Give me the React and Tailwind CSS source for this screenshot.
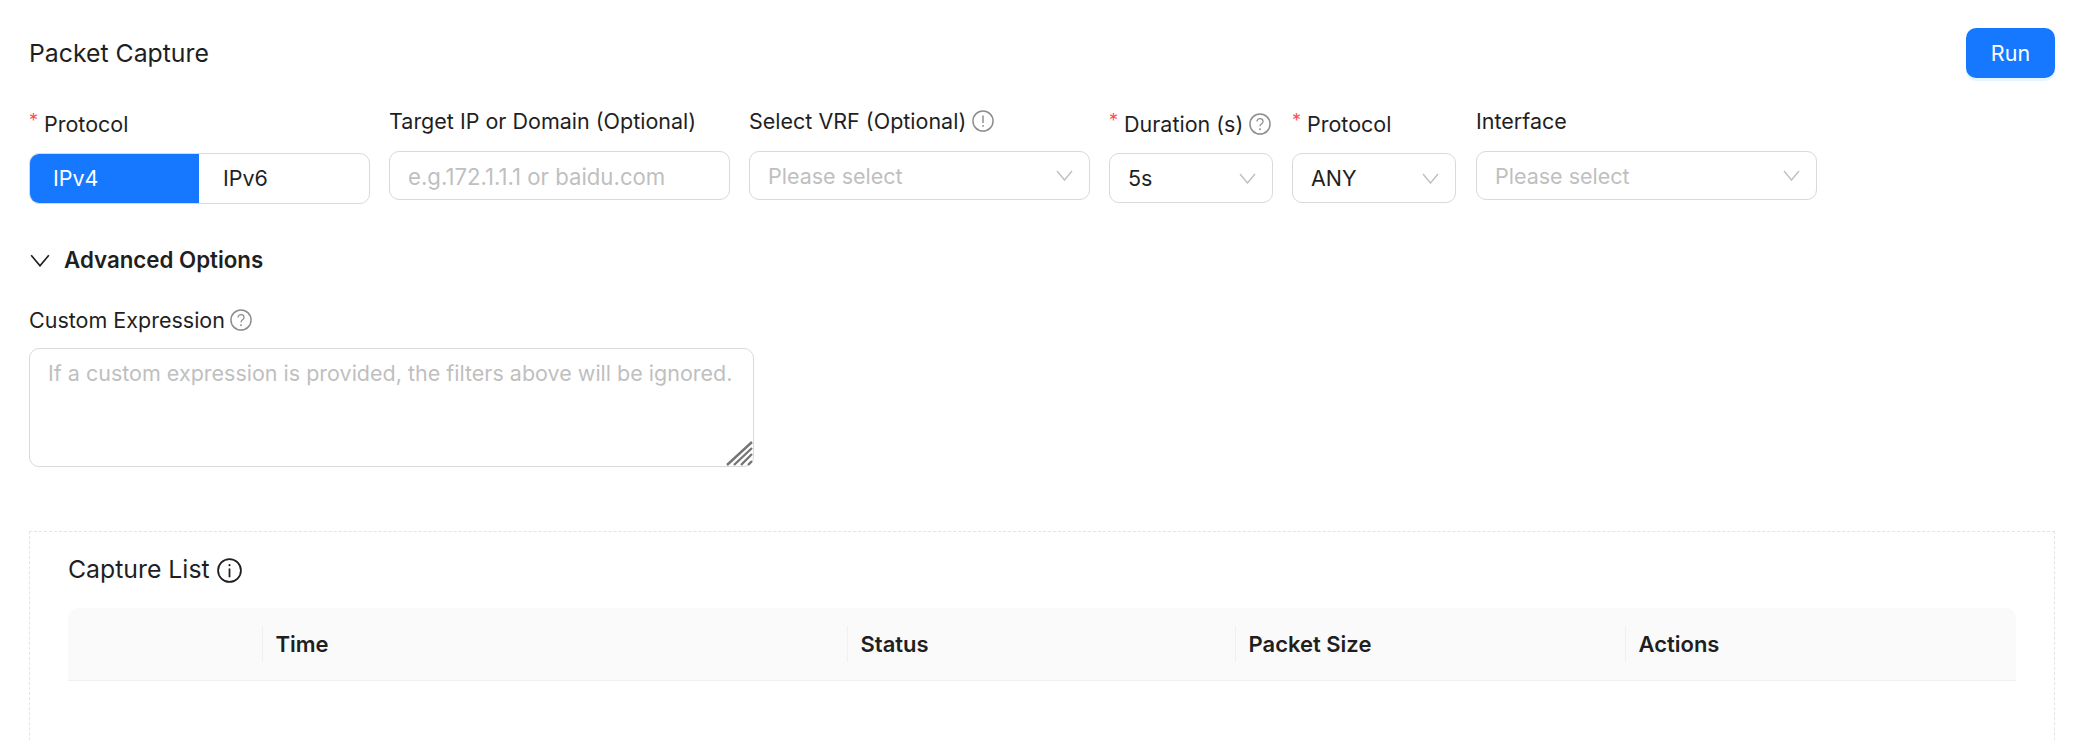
const Q = "text-[#8c8c8c]";

function CircleIcon({ kind, className = Q, size = 22, sw = 1.4 }) {
  return (
    <svg width={size} height={size} viewBox="0 0 21 21" fill="none" stroke="currentColor" className={`shrink-0 ${className}`}>
      <circle cx="10.5" cy="10.5" r="9.6" strokeWidth={sw} />
      {kind === "question" && (
        <>
          <path d="M7.6 8.2c0-1.7 1.3-2.8 2.9-2.8s2.9 1.1 2.9 2.6c0 2.3-2.9 2.3-2.9 4.6" strokeWidth="1.2" />
          <circle cx="10.5" cy="15.4" r="0.9" fill="currentColor" stroke="none" />
        </>
      )}
      {kind === "warn" && (
        <>
          <path d="M10.5 5.2v7.2" strokeWidth={sw} />
          <circle cx="10.5" cy="15.2" r="0.9" fill="currentColor" stroke="none" />
        </>
      )}
      {kind === "info" && (
        <>
          <circle cx="10.5" cy="6" r="0.9" fill="currentColor" stroke="none" />
          <path d="M10.5 8.8v7.4" strokeWidth={sw} />
        </>
      )}
    </svg>
  );
}

function Chevron({ className = "text-[#bfbfbf]", w = 17, h = 11 }) {
  return (
    <svg width={w} height={h} viewBox="0 0 17 11" fill="none" stroke="currentColor" strokeWidth="1.4" className={`shrink-0 ${className}`}>
      <path d="M1 1l7.5 9L16 1" />
    </svg>
  );
}

function Label({ required, children }) {
  if (required) {
    return (
      <div className="flex h-[28px] mt-[2px] mb-[15px] items-center leading-[28px] whitespace-nowrap">
        <span className="text-[#ff4d4f] mr-[6px] w-[9px] text-[18px] leading-[18px] relative -top-[3px]">*</span>
        {children}
      </div>
    );
  }
  return <div className="flex h-[26px] mb-[17px] items-center leading-[28px] whitespace-nowrap">{children}</div>;
}

function Select({ value, placeholder, tall }) {
  return (
    <div className={`flex items-center justify-between border border-[#d9d9d9] rounded-[10px] bg-white pl-[18px] pr-[16px] ${tall ? "h-[50px]" : "h-[49px]"}`}>
      {value ? <span>{value}</span> : <span className="text-[#bfbfbf] pt-[2px]">{placeholder}</span>}
      <Chevron />
    </div>
  );
}

export default function App() {
  return (
    <div className="h-[740px] overflow-hidden bg-white pl-[29px] pr-[31px] pt-[28px] font-['Inter',sans-serif] text-[21.5px] font-normal text-[#1f1f1f]">
      <div className="flex h-[50px] items-center justify-between">
        <h1 className="text-[24.8px] relative top-[1px]">Packet Capture</h1>
        <button type="button" className="h-[50px] w-[89px] rounded-[10px] bg-[#1677ff] text-white shadow-[0_3px_0_rgba(5,145,255,0.1)]">
          Run
        </button>
      </div>

      <div className="flex items-start mt-[30px]">
        <div className="w-[341px] mr-[19px]">
          <Label required>Protocol</Label>
          <div className="flex h-[51px] rounded-[10px] border border-[#d9d9d9] overflow-hidden">
            <div className="w-[170px] -my-px -ml-px flex items-center pl-[24px] bg-[#1677ff] text-white">IPv4</div>
            <div className="flex-1 flex items-center pl-[24px]">IPv6</div>
          </div>
        </div>
        <div className="w-[341px] mr-[19px]">
          <Label>Target IP or Domain (Optional)</Label>
          <input
            placeholder="e.g.172.1.1.1 or baidu.com"
            className="w-full h-[49px] border border-[#d9d9d9] rounded-[10px] px-[18px] pt-[2px] text-[22.2px] outline-none placeholder:text-[#bfbfbf]"
          />
        </div>
        <div className="w-[341px] mr-[19px]">
          <Label>
            Select VRF (Optional)
            <span className="ml-[6px]"><CircleIcon kind="warn" /></span>
          </Label>
          <Select placeholder="Please select" />
        </div>
        <div className="w-[164px] mr-[19px]">
          <Label required>
            Duration (s)
            <span className="ml-[6px]"><CircleIcon kind="question" /></span>
          </Label>
          <Select value="5s" tall />
        </div>
        <div className="w-[164px] mr-[20px]">
          <Label required>Protocol</Label>
          <Select value="ANY" tall />
        </div>
        <div className="w-[341px]">
          <Label>Interface</Label>
          <Select placeholder="Please select" />
        </div>
      </div>

      <div className="flex items-center h-[28px] mt-[42px] pl-[1px]">
        <Chevron className="text-[#1f1f1f]" w={20} h={13} />
        <span className="ml-[14px] text-[22.3px] font-semibold">Advanced Options</span>
      </div>

      <div className="flex h-[28px] items-center mt-[32px] mb-[14px]">
        Custom Expression
        <span className="ml-[5px]"><CircleIcon kind="question" /></span>
      </div>
      <div className="relative w-[725px] h-[119px]">
        <textarea
          placeholder="If a custom expression is provided, the filters above will be ignored."
          className="block w-full h-full resize-none border border-[#d9d9d9] rounded-[10px] px-[18px] py-[10px] leading-[28px] outline-none placeholder:text-[#bfbfbf]"
        />
        <svg width="27" height="25" viewBox="0 0 27 25" fill="none" stroke="#757575" strokeWidth="2.4" className="absolute right-[1px] bottom-[1px]">
          <path d="M1 24L26 1M8 24L26 7M15 24L26 13M22 24L26 20" />
        </svg>
      </div>

      <div className="mt-[64px] h-[300px] border border-dashed border-[#e4e4e4] pl-[38px] pr-[38px]">
        <div className="flex items-center h-[28px] mt-[24px] text-[24.8px]">
          Capture List
          <span className="ml-[7px]"><CircleIcon kind="info" className="text-[#1f1f1f]" size={25} sw={1.5} /></span>
        </div>
        <div className="grid grid-cols-[194px_585px_388px_390px_390px] h-[73px] mt-[24px] items-center rounded-t-[10px] bg-[#fafafa] border-b border-[#f0f0f0] text-[22px] font-semibold">
          <div className="h-[36px]" />
          {["Time", "Status", "Packet Size", "Actions"].map((t) => (
            <div key={t} className="h-[36px] flex items-center pl-[12.5px] border-l border-[#f0f0f0]">{t}</div>
          ))}
        </div>
      </div>
    </div>
  );
}
